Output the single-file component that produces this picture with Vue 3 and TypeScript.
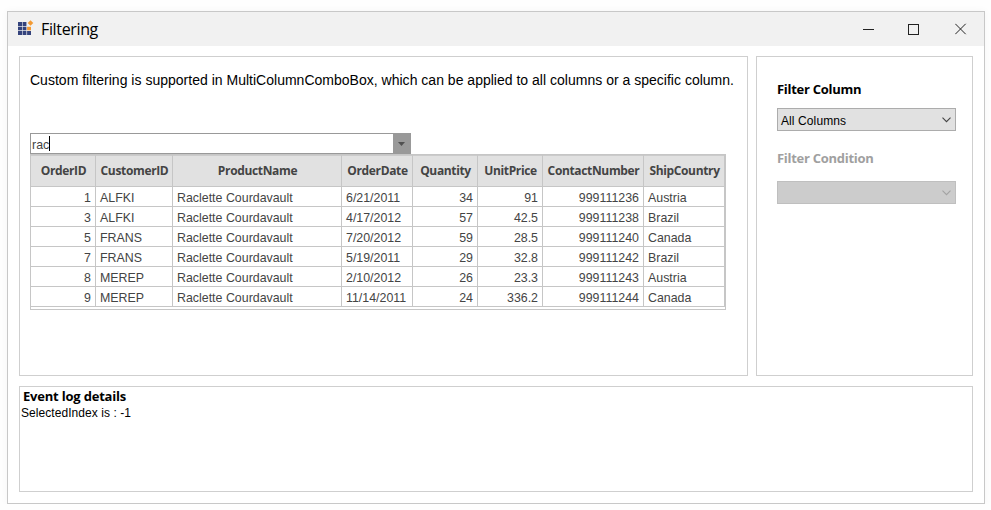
<script setup lang="ts">
import { ref } from 'vue'

interface Column {
  key: keyof Order
  width: number
  numeric?: boolean
}

interface Order {
  OrderID: number
  CustomerID: string
  ProductName: string
  OrderDate: string
  Quantity: number
  UnitPrice: number
  ContactNumber: number
  ShipCountry: string
}

const columns: Column[] = [
  { key: 'OrderID', width: 65, numeric: true },
  { key: 'CustomerID', width: 77 },
  { key: 'ProductName', width: 169 },
  { key: 'OrderDate', width: 71 },
  { key: 'Quantity', width: 65, numeric: true },
  { key: 'UnitPrice', width: 65, numeric: true },
  { key: 'ContactNumber', width: 101, numeric: true },
  { key: 'ShipCountry', width: 81 },
]

const product = 'Raclette Courdavault'
const orders: Order[] = [
  { OrderID: 1, CustomerID: 'ALFKI', ProductName: product, OrderDate: '6/21/2011', Quantity: 34, UnitPrice: 91, ContactNumber: 999111236, ShipCountry: 'Austria' },
  { OrderID: 3, CustomerID: 'ALFKI', ProductName: product, OrderDate: '4/17/2012', Quantity: 57, UnitPrice: 42.5, ContactNumber: 999111238, ShipCountry: 'Brazil' },
  { OrderID: 5, CustomerID: 'FRANS', ProductName: product, OrderDate: '7/20/2012', Quantity: 59, UnitPrice: 28.5, ContactNumber: 999111240, ShipCountry: 'Canada' },
  { OrderID: 7, CustomerID: 'FRANS', ProductName: product, OrderDate: '5/19/2011', Quantity: 29, UnitPrice: 32.8, ContactNumber: 999111242, ShipCountry: 'Brazil' },
  { OrderID: 8, CustomerID: 'MEREP', ProductName: product, OrderDate: '2/10/2012', Quantity: 26, UnitPrice: 23.3, ContactNumber: 999111243, ShipCountry: 'Austria' },
  { OrderID: 9, CustomerID: 'MEREP', ProductName: product, OrderDate: '11/14/2011', Quantity: 24, UnitPrice: 336.2, ContactNumber: 999111244, ShipCountry: 'Canada' },
]

const search = ref('rac')
const selectedIndex = ref(-1)
</script>

<template>
  <div class="window">
    <header class="titlebar">
      <svg class="logo" width="16" height="16" viewBox="0 0 16 16">
        <g fill="#34437c">
          <rect x="0" y="2" width="4" height="4" />
          <rect x="4.6" y="2" width="3.8" height="4" />
          <rect x="0" y="6.7" width="4" height="3.6" />
          <rect x="4.6" y="6.7" width="3.8" height="3.6" />
          <rect x="0" y="11" width="4" height="4" />
          <rect x="4.6" y="11" width="3.8" height="4" />
          <rect x="9.1" y="11" width="3.9" height="4" />
        </g>
        <rect x="9.1" y="6.8" width="3.9" height="3.5" fill="#f39a32" />
        <path d="M12.5 0.2L15.3 3L12.5 5.8L9.7 3Z" fill="#f39a32" />
      </svg>
      <h1 class="title">Filtering</h1>
      <div class="controls">
        <svg class="minimize" width="12" height="12" viewBox="0 0 12 12" shape-rendering="crispEdges"><path d="M0 5.5H11" stroke="#222" /></svg>
        <svg class="maximize" width="12" height="12" viewBox="0 0 12 12" shape-rendering="crispEdges"><path d="M.5 .5H10.5V10.5H.5Z" fill="none" stroke="#222" /></svg>
        <svg width="12" height="12" viewBox="0 0 12 12"><path d="M.3 .8L10.7 11.2M10.7 .8L.3 11.2" stroke="#222" /></svg>
      </div>
    </header>

    <main class="body">
      <section class="panel demo">
        <p class="intro">Custom filtering is supported in MultiColumnComboBox, which can be applied to all columns or a specific column.</p>
        <div class="combo">
          <div class="entry"><span class="query">{{ search }}</span><span class="caret"></span></div>
          <div class="drop">
            <svg width="7" height="4" viewBox="0 0 7 4"><path d="M0 0H7L3.5 4Z" fill="#505050" /></svg>
          </div>
        </div>
        <div class="popup">
          <table>
            <colgroup>
              <col v-for="c in columns" :key="c.key" :style="{ width: c.width + 'px' }" />
            </colgroup>
            <thead>
              <tr><th v-for="c in columns" :key="c.key">{{ c.key }}</th></tr>
            </thead>
            <tbody>
              <tr v-for="o in orders" :key="o.OrderID">
                <td v-for="c in columns" :key="c.key" :class="{ numeric: c.numeric }">{{ o[c.key] }}</td>
              </tr>
            </tbody>
          </table>
        </div>
      </section>

      <aside class="panel options">
        <div class="label">Filter Column</div>
        <div class="select">
          <span>All Columns</span>
          <svg width="9" height="6" viewBox="0 0 9 6"><path d="M.5 .7L4.5 4.7L8.5 .7" fill="none" stroke="#444" stroke-width="1.1" /></svg>
        </div>
        <div class="label off">Filter Condition</div>
        <div class="select off">
          <span></span>
          <svg width="9" height="6" viewBox="0 0 9 6"><path d="M.5 .7L4.5 4.7L8.5 .7" fill="none" stroke="#a3a3a3" stroke-width="1.1" /></svg>
        </div>
      </aside>

      <section class="panel log">
        <div class="log-title">Event log details</div>
        <div class="log-line">SelectedIndex is : {{ selectedIndex }}</div>
      </section>
    </main>
  </div>
</template>

<style>
body {
  background: #fefefe;
}
</style>

<style scoped>
.window {
  box-sizing: border-box;
  width: 978px;
  height: 493px;
  margin: 11px 0 0 7px;
  border: 1px solid #c8c8c8;
  background: #fff;
  box-shadow: 0 0 8px rgba(0, 0, 0, 0.04);
  font-family: "Liberation Sans", Arial, sans-serif;
  font-size: 12px;
  color: #000;
  white-space: nowrap;
}
.titlebar {
  display: flex;
  height: 34px;
  align-items: center;
  background: #f1f1f1;
  padding: 0 17px 0 10px;
}
.logo {
  margin-top: -2px;
}
.title {
  margin: 0 0 0 7px;
  font: 400 16px/22px "Open Sans", sans-serif;
  letter-spacing: -0.35px;
}
.controls {
  display: flex;
  gap: 34px;
  margin-left: auto;
}
.minimize {
  margin-top: 1px;
}
.maximize {
  margin: 1px 1px 0 -1px;
}
.body {
  display: grid;
  grid-template: 320px 106px / 729px 217px;
  gap: 10px 8px;
  padding: 10px 11px;
}
.panel {
  box-sizing: border-box;
  border: 1px solid #cfcfcf;
}
.demo {
  padding: 13px 10px 0;
}
.intro {
  margin: 0 0 53px;
  font-size: 14px;
  letter-spacing: 0.012px;
  line-height: 20px;
  height: 10px;
}
.combo {
  box-sizing: border-box;
  display: flex;
  width: 381px;
  height: 21px;
  border: 1px solid #999;
}
.entry {
  flex: 1;
  display: flex;
  padding: 2px 0 0 1px;
  color: #444;
}
.query {
  font-size: 12.4px;
  line-height: 19px;
}
.caret {
  width: 1px;
  height: 15px;
  background: #000;
}
.drop {
  display: flex;
  width: 17px;
  justify-content: center;
  align-items: center;
  background: #999;
}
.popup {
  box-sizing: border-box;
  width: 696px;
  height: 156px;
  border: 1px solid #c6c6c6;
}
table {
  width: 694px;
  table-layout: fixed;
  border-collapse: separate;
  border-spacing: 0;
}
th,
td {
  box-sizing: border-box;
  border: solid #c6c6c6;
  border-width: 0 1px 1px 0;
  color: #444;
}
th {
  height: 32px;
  padding: 1px 0 0 1px;
  background: #e1e1e1;
  box-shadow: inset 0 1px #cbcbcb;
  font: 700 12px/30px "Open Sans", sans-serif;
  letter-spacing: -0.35px;
}
td {
  height: 20px;
  padding: 3px 4px 0;
  font-size: 12.4px;
  line-height: 16px;
}
td.numeric {
  text-align: right;
}
.options {
  padding: 22px 16px 0 20px;
}
.label {
  font: 700 13px/20px "Open Sans", sans-serif;
  letter-spacing: -0.28px;
}
.label.off {
  margin-top: 17px;
  color: #a0a0a0;
}
.select {
  box-sizing: border-box;
  display: flex;
  justify-content: space-between;
  align-items: center;
  height: 23px;
  margin-top: 9px;
  padding: 0 4px 0 3px;
  border: 1px solid #acacac;
  background: #e1e1e1;
}
.select span {
  padding-top: 3px;
  letter-spacing: 0.1px;
}
.select.off {
  margin-top: 13px;
  border-color: #bfbfbf;
  background: #ccc;
}
.log {
  grid-column: 1 / -1;
}
.log-title {
  padding: 1px 0 0 3px;
  font: 700 13px/16px "Open Sans", sans-serif;
  letter-spacing: -0.2px;
}
.log-line {
  padding: 1px 0 0 1px;
  letter-spacing: 0.06px;
  line-height: 17px;
}
</style>
